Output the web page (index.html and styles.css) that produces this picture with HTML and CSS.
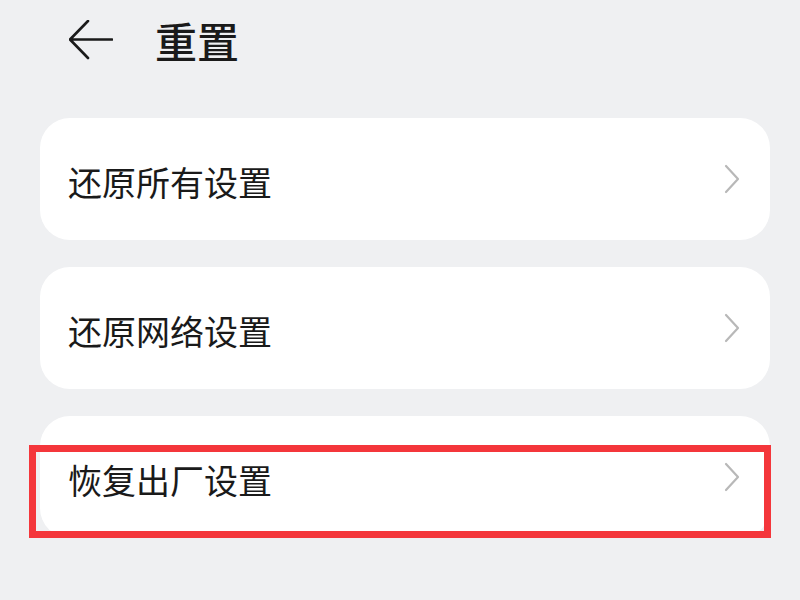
FILE: index.html
```html
<!DOCTYPE html>
<html lang="zh-CN">
<head>
    <meta charset="UTF-8">
    <meta name="viewport" content="width=device-width, initial-scale=1.0">
    <title>重置</title>
    <link rel="stylesheet" href="styles.css">
</head>
<body>
    <div class="page">
        <!-- Title bar -->
        <div class="title-bar">
            <svg class="back-icon" width="44" height="40" viewBox="0 0 44 40">
                <path d="M19 1 L1 19.5 L19 38 M1 19.5 H43" fill="none" stroke="#1a1a1a" stroke-width="2.6" stroke-linecap="round" stroke-linejoin="round"/>
            </svg>
            <h1 class="title">重置</h1>
        </div>

        <!-- Reset options -->
        <div class="list">
            <div class="card">
                <span class="label">还原所有设置</span>
                <svg class="chevron" width="16" height="30" viewBox="0 0 16 30">
                    <path d="M2 2 L14 15 L2 28" fill="none" stroke="#b8b8b8" stroke-width="2.2" stroke-linecap="round" stroke-linejoin="round"/>
                </svg>
            </div>
            <div class="card">
                <span class="label">还原网络设置</span>
                <svg class="chevron" width="16" height="30" viewBox="0 0 16 30">
                    <path d="M2 2 L14 15 L2 28" fill="none" stroke="#b8b8b8" stroke-width="2.2" stroke-linecap="round" stroke-linejoin="round"/>
                </svg>
            </div>
            <div class="card">
                <span class="label">恢复出厂设置</span>
                <svg class="chevron" width="16" height="30" viewBox="0 0 16 30">
                    <path d="M2 2 L14 15 L2 28" fill="none" stroke="#b8b8b8" stroke-width="2.2" stroke-linecap="round" stroke-linejoin="round"/>
                </svg>
                <div class="highlight"></div>
            </div>
        </div>
    </div>
</body>
</html>
```

FILE: styles.css
```css
body {
    margin: 0;
    background-color: #eff0f2;
    font-family: "Noto Sans CJK SC", "Noto Sans", sans-serif;
    color: #1a1a1a;
}
.page {
    width: 800px;
    height: 600px;
    overflow: hidden;
}
.title-bar {
    display: flex;
    align-items: center;
    height: 80px;
    padding-left: 69px;
    box-sizing: border-box;
}
.back-icon {
    display: block;
    margin-top: -1px;
}
.title {
    margin: 0 0 0 42px;
    font-size: 42px;
    font-weight: 500;
    line-height: 1;
}
.list {
    display: flex;
    flex-direction: column;
    gap: 27px;
    padding: 38px 30px 0 40px;
}
.card {
    position: relative;
    display: flex;
    align-items: center;
    justify-content: space-between;
    height: 122px;
    padding: 0 30px 0 28px;
    background-color: #ffffff;
    border-radius: 30px;
}
.label {
    font-size: 34px;
    line-height: 1;
    padding-top: 6px;
}
.chevron {
    display: block;
}
/* red box drawn over the last option */
.highlight {
    position: absolute;
    left: -11px;
    right: -1px;
    top: 29px;
    bottom: 0;
    border: 7px solid #f4363b;
}
```
